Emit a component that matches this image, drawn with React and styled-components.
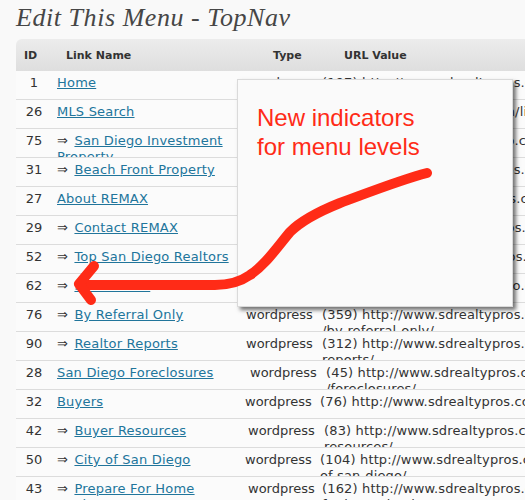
import React from "react";
import styled, { createGlobalStyle } from "styled-components";

const GlobalStyle = createGlobalStyle`
  html, body {
    margin: 0;
    padding: 0;
    overflow: hidden;
    background: #f9f9f9;
  }
  body {
    font-family: "DejaVu Sans", Verdana, sans-serif;
  }
`;

const Page = styled.div`
  position: relative;
  width: 525px;
  height: 500px;
  overflow: hidden;
  padding-left: 16px;
  box-sizing: border-box;
  background: #f9f9f9;
`;

const Title = styled.h2`
  margin: 5px 0 9px;
  font: italic normal 26px/25px "Liberation Serif", "Times New Roman", serif;
  letter-spacing: 0.55px;
  color: #464646;
  white-space: nowrap;
`;

const Table = styled.div`
  width: 580px;
`;

const HeaderRow = styled.div`
  display: flex;
  align-items: center;
  height: 32px;
  border-radius: 6px 6px 0 0;
  background: linear-gradient(to bottom, #ececec, #dedede);
  font: bold 11px "DejaVu Sans", Verdana, sans-serif;
  color: #333;
`;

const HeadCell = styled.div`
  width: ${(p) => (p.$w ? `${p.$w}px` : "auto")};
  flex: ${(p) => (p.$w ? "none" : "1")};
  padding-left: ${(p) => p.$pl || 0}px;
  box-sizing: border-box;
`;

const Row = styled.div`
  display: flex;
  height: 28px;
  overflow: hidden;
  border-bottom: 1px solid #dcdcdc;
  background: #fbfbfb;
  font-size: 13px;
  line-height: 16px;
  color: #333;
`;

const IdCell = styled.div`
  flex: none;
  width: 36px;
  padding-top: 4px;
  text-align: center;
`;

const LinkCell = styled.div`
  flex: none;
  width: ${(p) => p.$w}px;
  padding: 4px 8px 0 5px;
  box-sizing: border-box;
  letter-spacing: 0.2px;
`;

const Level = styled.span`
  color: #333;
  margin-right: 2px;
`;

const Link = styled.a`
  color: #21759b;
  text-decoration: underline;
`;

const TypeCell = styled.div`
  flex: none;
  width: ${(p) => p.$w}px;
  padding-top: 4px;
  white-space: nowrap;
`;

const UrlCell = styled.div`
  flex: 1;
  padding-top: 4px;
  white-space: nowrap;
  letter-spacing: 0.15px;
`;

const Callout = styled.div`
  position: absolute;
  left: 237px;
  top: 79px;
  width: 276px;
  height: 228px;
  box-sizing: border-box;
  padding: 23px 0 0 19px;
  background: #fafafa;
  border: 1px solid #dadada;
  box-shadow: 3px 3px 4px rgba(0, 0, 0, 0.55);
  font: 24px/29px "Liberation Sans", Arial, sans-serif;
  color: #ff2b17;
`;

const Annotation = styled.svg`
  position: absolute;
  left: 0;
  top: 0;
  width: 525px;
  height: 500px;
  pointer-events: none;
`;

const rows = [
  { id: 1, lvl: 0, name: "Home", type: "wordpress", tx: 248, ux: 322, url: "(197) http://www.sdrealtypros.com/" },
  { id: 26, lvl: 0, name: "MLS Search", type: "custom", tx: 248, ux: 324, url: "http://www.sdrealtypros.com/listings/" },
  { id: 75, lvl: 1, name: "San Diego Investment Property", type: "wordpress", tx: 248, ux: 323, url: "(108) http://www.sdrealtypro.com/san-diego-", url2: "investment-property/" },
  { id: 31, lvl: 1, name: "Beach Front Property", type: "wordpress", tx: 248, ux: 322, url: "(112) http://www.sdrealtypros.com/beach-", url2: "front-property/" },
  { id: 27, lvl: 0, name: "About REMAX", type: "wordpress", tx: 248, ux: 326, url: "(22) http://www.sdrealtypros.com/about/" },
  { id: 29, lvl: 1, name: "Contact REMAX", type: "wordpress", tx: 248, ux: 323, url: "(124) http://www.sdrealtypros.com/contact/" },
  { id: 52, lvl: 1, name: "Top San Diego Realtors", type: "wordpress", tx: 248, ux: 324, url: "(165) http://www.sdrealtypros.com/top-", url2: "san-diego-realtors/" },
  { id: 62, lvl: 1, name: "Short Sales", type: "wordpress", tx: 248, ux: 329, url: "(210) http://www.sdrealtypro.com/short-", url2: "sales/" },
  { id: 76, lvl: 1, name: "By Referral Only", type: "wordpress", tx: 246, ux: 322, url: "(359) http://www.sdrealtypros.com", url2: "/by-referral-only/" },
  { id: 90, lvl: 1, name: "Realtor Reports", type: "wordpress", tx: 246, ux: 322, url: "(312) http://www.sdrealtypros.com/realtor-", url2: "reports/" },
  { id: 28, lvl: 0, name: "San Diego Foreclosures", type: "wordpress", tx: 250, ux: 326, url: "(45) http://www.sdrealtypros.com/san-diego", url2: "/foreclosures/" },
  { id: 32, lvl: 0, name: "Buyers", type: "wordpress", tx: 245, ux: 320, url: "(76) http://www.sdrealtypros.com/buyers/" },
  { id: 42, lvl: 1, name: "Buyer Resources", type: "wordpress", tx: 248, ux: 324, url: "(83) http://www.sdrealtypros.com/buyer-", url2: "resources/" },
  { id: 50, lvl: 1, name: "City of San Diego", type: "wordpress", tx: 245, ux: 320, url: "(104) http://www.sdrealtypros.com/city-", url2: "of-san-diego/" },
  { id: 43, lvl: 1, name: "Prepare For Home Buying", type: "wordpress", tx: 248, ux: 322, url: "(162) http://www.sdrealtypros.com/prepare-", url2: "for-home-buying/" },
];

export default function App() {
  return (
    <>
      <GlobalStyle />
      <Page>
        <Title>Edit This Menu - TopNav</Title>
        <Table>
          <HeaderRow>
            <HeadCell $w={50} $pl={8}>ID</HeadCell>
            <HeadCell $w={207}>Link Name</HeadCell>
            <HeadCell $w={71}>Type</HeadCell>
            <HeadCell>URL Value</HeadCell>
          </HeaderRow>
          {rows.map((r) => (
            <Row key={r.id}>
              <IdCell>{r.id}</IdCell>
              <LinkCell $w={r.tx - 52}>
                {r.lvl > 0 && <Level>⇒ </Level>}
                <Link href="#">{r.name}</Link>
              </LinkCell>
              <TypeCell $w={r.ux - r.tx}>{r.type}</TypeCell>
              <UrlCell>
                {r.url}
                {r.url2 && (
                  <>
                    <br />
                    {r.url2}
                  </>
                )}
              </UrlCell>
            </Row>
          ))}
        </Table>
        <Callout>
          New indicators
          <br />
          for menu levels
        </Callout>
        <Annotation viewBox="0 0 525 500">
          <path
            d="M427,173 C400,180 370,192 340,203 C315,213 300,222 290,232 C275,250 265,265 250,275 C240,282 230,285 215,285 L80,285"
            fill="none"
            stroke="#ff2b17"
            strokeWidth="10"
            strokeLinecap="round"
            strokeLinejoin="round"
          />
          <path
            d="M94,266 L79,284 L91,300"
            fill="none"
            stroke="#ff2b17"
            strokeWidth="10"
            strokeLinecap="round"
            strokeLinejoin="round"
          />
        </Annotation>
      </Page>
    </>
  );
}
